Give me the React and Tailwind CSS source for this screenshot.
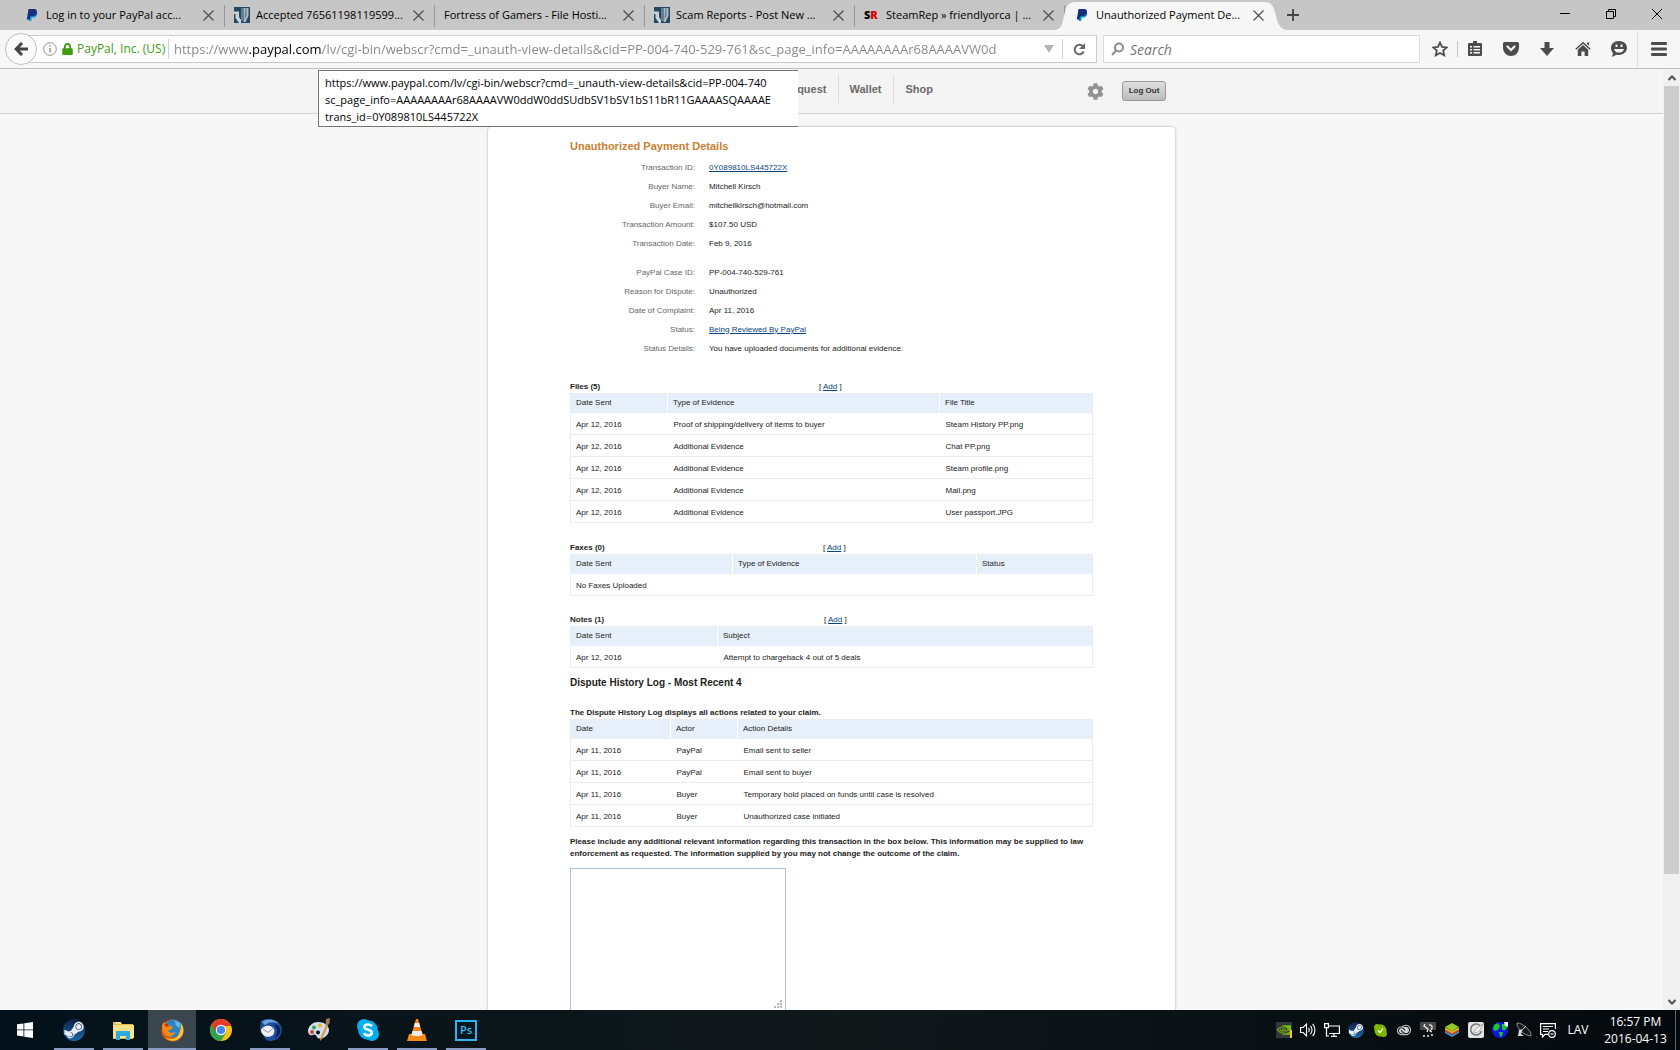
import { useState } from "react";
import { FaSteamSymbol, FaSkype, FaCog, FaLock } from "react-icons/fa";
import { SiAdobecreativecloud, SiNvidia } from "react-icons/si";

const URL_TEXT =
    "https://www.paypal.com/lv/cgi-bin/webscr?cmd=_unauth-view-details&cid=PP-004-740-529-761&sc_page_info=AAAAAAAAr68AAAAVW0d";

const PayPalIcon = () => (
    <svg className="w-4 h-4 shrink-0" viewBox="0 0 16 16">
        <path d="M6 5h6.600c1.300 1 .9 5.600-3.800 5.600H7.800L7.200 14H4.600z" fill="#139ad6" />
        <path d="M4.500 2h5.300c3 0 3.600 2 3 4-.6 2.300-2.300 3.300-4.600 3.300H6.400L5.600 12.500H2.800z" fill="#17307a" />
    </svg>
);

const ForumIcon = () => (
    <svg className="w-4 h-4 shrink-0" viewBox="0 0 16 16">
        <rect width="16" height="16" fill="#23485f" />
        <path d="M0 0h5.500v4H0z" fill="#23485f" />
        <path d="M0 4.500h5V10l2 3v3H5L1.500 11V7H0z" fill="#c9d2d8" />
        <path d="M7 1h2v13H7z" fill="#5f7c8d" />
        <path d="M9.500 1h5v8l-3 6h-2z" fill="#aebbc4" />
        <path d="M11.500 1h1v8l-2 4z" fill="#5f7c8d" />
    </svg>
);

const SteamRepIcon = () => (
    <span className="w-4 shrink-0 text-[11px] font-extrabold leading-4 text-black">
        S<span className="text-[#e10000]">R</span>
    </span>
);

const CloseIcon = () => (
    <svg className="w-[11px] h-[11px]" viewBox="0 0 11 11" stroke="#4d4d4d" strokeWidth="1.2">
        <path d="M.5.5l10 10M10.500.5l-10 10" />
    </svg>
);

const tabs = [
    { title: "Log in to your PayPal acc...", icon: <PayPalIcon /> },
    { title: "Accepted 76561198119599...", icon: <ForumIcon /> },
    { title: "Fortress of Gamers - File Hosti..." },
    { title: "Scam Reports - Post New ...", icon: <ForumIcon /> },
    { title: "SteamRep » friendlyorca | ...", icon: <SteamRepIcon /> },
    { title: "Unauthorized Payment De...", icon: <PayPalIcon />, active: true },
];

const Tab = ({ title, icon, active }) => (
    <div className="relative flex items-center w-[210px] h-[30px] pl-[9px] pr-[11px]">
        {active && (
            <svg className="absolute -left-3 top-0 w-[236px] h-[30px]" viewBox="0 0 236 30">
                <path d="M0 30c9 0 9-6 11-14s3-14 12-14h188c9 0 10 6 12 14s4 14 13 14z" fill="#f6f6f6" />
            </svg>
        )}
        <button className="relative flex flex-1 items-center gap-[6px] min-w-0 text-left whitespace-nowrap">
            {icon}
            <span>{title}</span>
        </button>
        <button className="relative" aria-label="Close tab">
            <CloseIcon />
        </button>
        {!active && <span className="absolute right-0 top-[5px] h-[22px] w-px bg-[#989898]" />}
    </div>
);

const TabBar = () => (
    <div className="flex h-[30px] bg-[#c6c6c6] pl-[15px] text-[11px]">
        {tabs.map((tab) => (
            <Tab key={tab.title} {...tab} />
        ))}
        <button className="ml-[12px]" aria-label="New tab">
            <svg className="w-3 h-3" viewBox="0 0 12 12" stroke="#444" strokeWidth="1.800">
                <path d="M6 0v12M0 6h12" />
            </svg>
        </button>
        <div className="ml-auto flex items-center gap-9 pr-[18px] pb-[2px]">
            <button aria-label="Minimize">
                <svg className="w-[10px] h-[10px]" viewBox="0 0 10 10" stroke="#000">
                    <path d="M0 4.500h10" />
                </svg>
            </button>
            <button aria-label="Restore">
                <svg className="w-[10px] h-[10px]" viewBox="0 0 10 10" stroke="#000" fill="none">
                    <path d="M.5 2.500h7v7h-7zM2.500 2.500v-2h7v7h-2" />
                </svg>
            </button>
            <button aria-label="Close window">
                <svg className="w-[10px] h-[10px]" viewBox="0 0 10 10" stroke="#000">
                    <path d="M0 0l10 10M10 0L0 10" />
                </svg>
            </button>
        </div>
    </div>
);

const ToolButton = ({ label, children }) => (
    <button aria-label={label} className="flex w-9 justify-center text-[#4c4c4c]">
        {children}
    </button>
);

const ToolBar = () => {
    const [url, setUrl] = useState(URL_TEXT);
    return (
        <div className="relative flex items-center h-[39px] bg-[#f6f6f6] border-b border-[#bdbdbd] pl-[5px]">
            <button
                aria-label="Back"
                className="relative z-10 flex items-center justify-center w-8 h-8 rounded-full border border-[#c2c2c2] bg-[#fafafa]"
            >
                <svg className="w-[14px] h-[14px]" viewBox="0 0 14 14" stroke="#444" strokeWidth="3" fill="none">
                    <path d="M8 1L2.200 7 8 13M2.500 7H14" />
                </svg>
            </button>
            <div className="flex flex-1 items-center h-7 -ml-3 pl-[17px] bg-white border border-[#cacaca]">
                <svg className="w-[14px] h-[14px]" viewBox="0 0 14 14" fill="none" stroke="#8f8f8f">
                    <circle cx="7" cy="7" r="6.300" />
                    <path d="M7 6v4.500M7 3.300v1.500" strokeWidth="1.500" />
                </svg>
                <FaLock className="ml-[5px] w-[11px] h-[12px] text-[#3f9a14]" />
                <span className="ml-1 w-[89px] whitespace-nowrap text-[12px] text-[#3f9a14]">PayPal, Inc. (US)</span>
                <span className="w-px h-5 mx-[2px] bg-[#cfcfcf]" />
                <input
                    aria-label="Address"
                    value={url}
                    onChange={(e) => setUrl(e.target.value)}
                    className="flex-1 min-w-0 h-6 ml-[3px] text-[13px] text-transparent caret-black outline-none bg-clip-text bg-[linear-gradient(90deg,#858585_75px,#000_75px,#000_148px,#858585_148px)]"
                />
                <button aria-label="Show history" className="px-[8px]">
                    <svg className="w-[10px] h-2" viewBox="0 0 10 8" fill="#b4b4b4">
                        <path d="M0 0h10L5 8z" />
                    </svg>
                </button>
                <span className="w-px h-5 bg-[#cfcfcf]" />
                <button aria-label="Reload" className="px-[10px]">
                    <svg className="w-[13px] h-[13px]" viewBox="0 0 13 13" fill="none" stroke="#6a6a6a" strokeWidth="2">
                        <path d="M10 3.500A4.700 4.700 0 1 0 10.700 8.500" />
                        <path d="M12 0v6H6z" fill="#6a6a6a" stroke="none" />
                    </svg>
                </button>
            </div>
            <div className="flex items-center w-[317px] h-7 ml-[6px] pl-[7px] gap-[5px] bg-white border border-[#dcdcdc]">
                <svg className="w-[14px] h-[14px]" viewBox="0 0 14 14" fill="none" stroke="#8c8c8c" strokeWidth="2">
                    <circle cx="8" cy="5.500" r="4" />
                    <path d="M5 8.500L1 13" />
                </svg>
                <input
                    aria-label="Search"
                    placeholder="Search"
                    className="flex-1 min-w-0 text-[14px] italic outline-none placeholder:text-[#757575]"
                />
            </div>
            <div className="flex items-center pl-[2px]">
                <ToolButton label="Bookmark">
                    <svg className="w-4 h-4" viewBox="0 0 16 16" fill="none" stroke="currentColor" strokeWidth="1.800">
                        <path d="M8 1.500l2 4.400 4.700.5-3.500 3.200 1 4.700L8 12l-4.200 2.300 1-4.700L1.300 6.400 6 5.900z" />
                    </svg>
                </ToolButton>
                <span className="w-px h-4 -mx-px bg-[#c8c8c8]" />
                <ToolButton label="Bookmarks list">
                    <svg className="w-4 h-4" viewBox="0 0 16 16" fill="currentColor">
                        <path d="M6 0h4v2h4a1 1 0 0 1 1 1v11a1 1 0 0 1-1 1H2a1 1 0 0 1-1-1V3a1 1 0 0 1 1-1h4z" />
                        <path d="M3 5h2v1.600H3zM6.500 5H13v1.600H6.500zM3 8h2v1.600H3zM6.500 8H13v1.600H6.500zM3 11h2v1.600H3zM6.500 11H13v1.600H6.500z" fill="#f6f6f6" />
                    </svg>
                </ToolButton>
                <ToolButton label="Pocket">
                    <svg className="w-4 h-4" viewBox="0 0 16 16">
                        <path d="M1.500 1h13A1.500 1.500 0 0 1 16 2.500V7A8 8 0 0 1 0 7V2.500A1.500 1.500 0 0 1 1.500 1z" fill="currentColor" />
                        <path d="M4.500 5.500L8 9l3.500-3.500" fill="none" stroke="#f6f6f6" strokeWidth="2.200" strokeLinecap="round" />
                    </svg>
                </ToolButton>
                <ToolButton label="Downloads">
                    <svg className="w-4 h-4" viewBox="0 0 16 16" fill="currentColor">
                        <path d="M5.500 1h5v6H15l-7 8-7-8h4.500z" />
                    </svg>
                </ToolButton>
                <ToolButton label="Home">
                    <svg className="w-4 h-4" viewBox="0 0 16 16" fill="currentColor">
                        <path d="M8 .8l7.700 7-1 1L8 2.800 1.300 8.800l-1-1zM12 1.500h2v3.300l-2-1.800z" />
                        <path d="M8 4l5.200 4.800V15H9.600v-4.500H6.400V15H2.800V8.800z" />
                    </svg>
                </ToolButton>
                <ToolButton label="Hello">
                    <svg className="w-4 h-4" viewBox="0 0 16 16" fill="currentColor">
                        <path d="M8 0c5 0 8 3 8 6.800S12.500 14 8 14c-1 0-1.800-.1-2.500-.3L1 16l1-4C.7 10.700 0 8.900 0 6.800 0 3 3 0 8 0z" />
                        <path d="M4.500 3.500h2V6h-2zM9.500 3.500h2V6h-2zM3 8h10c-.5 2.500-2.500 3.600-5 3.600S3.500 10.500 3 8z" fill="#f6f6f6" />
                    </svg>
                </ToolButton>
                <span className="w-px h-9 bg-[#e0e0e0]" />
                <button aria-label="Menu" className="px-[13px]">
                    <svg className="w-4 h-[14px]" viewBox="0 0 16 14" fill="#4c4c4c">
                        <rect width="16" height="3" rx="1" />
                        <rect y="5.500" width="16" height="3" rx="1" />
                        <rect y="11" width="16" height="3" rx="1" />
                    </svg>
                </button>
            </div>
        </div>
    );
};

const Header = () => (
    <header className="h-[45px] bg-[#f4f4f4] border-b border-[#d4d4d4]">
        <div className="flex justify-end w-[687px] mx-auto pr-[9px] text-[11px] font-bold text-[#6b6b6b]">
            <nav className="flex h-7 mt-[6px] leading-7">
                <a href="#request" className="px-[11px] border-r border-[#dcdcdc]">Request</a>
                <a href="#wallet" className="px-[11px] border-r border-[#dcdcdc]">Wallet</a>
                <a href="#shop" className="px-[12px]">Shop</a>
            </nav>
            <button aria-label="Settings" className="h-[45px] ml-[142px] mr-[18px]">
                <FaCog className="w-[17px] h-[17px] text-[#929292]" />
            </button>
            <button className="w-11 h-5 mt-[12px] rounded-[3px] border border-[#9b9b9b] bg-linear-to-b from-[#dedede] to-[#bdbdbd] text-[8px] text-[#333]">
                Log Out
            </button>
        </div>
    </header>
);

const link = "text-[#084482] underline";

const details = [
    [
        ["Transaction ID:", <a href="#transaction" className={link}>0Y089810LS445722X</a>],
        ["Buyer Name:", "Mitchell Kirsch"],
        ["Buyer Email:", "mitchellkirsch@hotmail.com"],
        ["Transaction Amount:", "$107.50 USD"],
        ["Transaction Date:", "Feb 9, 2016"],
    ],
    [
        ["PayPal Case ID:", "PP-004-740-529-761"],
        ["Reason for Dispute:", "Unauthorized"],
        ["Date of Complaint:", "Apr 11, 2016"],
        ["Status:", <a href="#status" className={link}>Being Reviewed By PayPal</a>],
        ["Status Details:", "You have uploaded documents for additional evidence."],
    ],
];

const files = [
    ["Apr 12, 2016", "Proof of shipping/delivery of items to buyer", "Steam History PP.png"],
    ["Apr 12, 2016", "Additional Evidence", "Chat PP.png"],
    ["Apr 12, 2016", "Additional Evidence", "Steam profile.png"],
    ["Apr 12, 2016", "Additional Evidence", "Mail.png"],
    ["Apr 12, 2016", "Additional Evidence", "User passport.JPG"],
];

const log = [
    ["Apr 11, 2016", "PayPal", "Email sent to seller"],
    ["Apr 11, 2016", "PayPal", "Email sent to buyer"],
    ["Apr 11, 2016", "Buyer", "Temporary hold placed on funds until case is resolved"],
    ["Apr 11, 2016", "Buyer", "Unauthorized case initiated"],
];

const DataTable = ({ cols, head, rows }) => (
    <table className="w-full table-fixed border border-[#ececec] text-left">
        <colgroup>
            {cols.map((c, i) => (
                <col key={i} className={c} />
            ))}
        </colgroup>
        <thead>
            <tr className="h-[19px] bg-[#e7f0fa]">
                {head.map((h) => (
                    <th key={h} className="pl-[5px] font-normal border-l border-white first:border-l-0">{h}</th>
                ))}
            </tr>
        </thead>
        <tbody>
            {rows.map((row, i) => (
                <tr key={i} className="h-[22px] border-b border-[#ececec]">
                    {row.map((cell, j) => (
                        <td key={j} className="pt-[3px] pl-[6px] first:pl-[5px]">{cell}</td>
                    ))}
                </tr>
            ))}
        </tbody>
    </table>
);

const SectionTitle = ({ title, width }) => (
    <div className="flex h-[13px] items-center">
        <h3 className={`font-bold ${width}`}>{title}</h3>
        <span>
            [ <a href="#add" className={link}>Add</a> ]
        </span>
    </div>
);

const Details = () => (
    <main className="w-[687px] mx-auto mt-[13px] h-[960px] pl-[82px] pr-[82px] pt-[12px] rounded-[4px] bg-white shadow-[0_0_3px_rgba(0,0,0,0.3)] text-[8px] leading-[10px] text-[#222]">
        <h1 className="text-[11px] leading-[14px] font-bold text-[#cc7f32]">Unauthorized Payment Details</h1>
        <div className="flex flex-col gap-[10px] mt-[5px]">
            {details.map((group, i) => (
                <dl key={i}>
                    {group.map(([label, value]) => (
                        <div key={label} className="flex items-center h-[19px]">
                            <dt className="w-[125px] text-right text-[#666]">{label}</dt>
                            <dd className="ml-[14px]">{value}</dd>
                        </div>
                    ))}
                </dl>
            ))}
        </div>
        <section className="mt-[22px]">
            <SectionTitle title="Files (5)" width="w-[249px]" />
            <DataTable
                cols={["w-[97px]", "w-[272px]", ""]}
                head={["Date Sent", "Type of Evidence", "File Title"]}
                rows={files}
            />
        </section>
        <section className="mt-[18px]">
            <SectionTitle title="Faxes (0)" width="w-[253px]" />
            <DataTable
                cols={["w-[162px]", "w-[244px]", ""]}
                head={["Date Sent", "Type of Evidence", "Status"]}
                rows={[["No Faxes Uploaded", "", ""]]}
            />
        </section>
        <section className="mt-[17px]">
            <SectionTitle title="Notes (1)" width="w-[254px]" />
            <DataTable
                cols={["w-[147px]", ""]}
                head={["Date Sent", "Subject"]}
                rows={[["Apr 12, 2016", "Attempt to chargeback 4 out of 5 deals"]]}
            />
        </section>
        <h2 className="mt-[8px] text-[10px] leading-[14px] font-bold">Dispute History Log - Most Recent 4</h2>
        <section className="mt-[16px]">
            <p className="h-[13px] leading-[13px] font-bold">The Dispute History Log displays all actions related to your claim.</p>
            <DataTable
                cols={["w-[100px]", "w-[67px]", ""]}
                head={["Date", "Actor", "Action Details"]}
                rows={log}
            />
        </section>
        <label htmlFor="info" className="block mt-[9px] leading-3 font-bold whitespace-nowrap">
            Please include any additional relevant information regarding this transaction in the box below. This information may be supplied to law
            <br />
            enforcement as requested. The information supplied by you may not change the outcome of the claim.
        </label>
        <div className="relative w-[216px] mt-[8px]">
            <textarea id="info" className="block w-full h-[143px] resize-none border border-[#a9c1da] outline-none" />
            <svg className="absolute right-1 bottom-[3px] w-2 h-2" viewBox="0 0 8 8" fill="#b5b5b5">
                <path d="M6 0h2v2H6zM6 3h2v2H6zM3 3h2v2H3zM6 6h2v2H6zM3 6h2v2H3zM0 6h2v2H0z" />
            </svg>
        </div>
    </main>
);

const ScrollBar = () => (
    <div className="flex flex-col items-center w-[17px] bg-[#f0f0f0]">
        <svg className="w-2 h-[17px]" viewBox="0 0 8 17" fill="none" stroke="#505050" strokeWidth="2">
            <path d="M.5 11L4 7.500 7.500 11" />
        </svg>
        <div className="w-[15px] h-[788px] bg-[#cdcdcd]" />
        <svg className="w-2 h-[17px] mt-auto" viewBox="0 0 8 17" fill="none" stroke="#505050" strokeWidth="2">
            <path d="M.5 7L4 10.500 7.500 7" />
        </svg>
    </div>
);

const SteamLogo = ({ size }) => (
    <span className={`flex items-center justify-center rounded-full bg-linear-to-b from-[#0d1f45] to-[#1b6ba8] text-[#e8edf2] ${size}`}>
        <FaSteamSymbol className="w-full h-full" />
    </span>
);

const SkypeLogo = () => (
    <svg className="w-[22px] h-[22px]" viewBox="0 0 22 22">
        <circle cx="7" cy="7" r="7" fill="#00aff0" />
        <circle cx="15" cy="15" r="7" fill="#00aff0" />
        <circle cx="11" cy="11" r="9.800" fill="#00aff0" />
        <path d="M14.800 7.500c-.8-1.600-2.200-2-3.800-2-2 0-3.600.9-3.600 2.600 0 3.600 7.400 1.800 7.400 5.400 0 1.900-1.800 2.900-3.800 2.900-1.800 0-3.300-.7-3.900-2.400" fill="none" stroke="#fff" strokeWidth="2.600" />
    </svg>
);

const taskItems = [
    {
        name: "Start",
        icon: (
            <svg className="w-4 h-4" viewBox="0 0 16 16" fill="#fff">
                <path d="M0 2.300l6.500-.9v6.100H0zM7.300 1.300L16 0v7.500H7.300zM0 8.300h6.500v6.200L0 13.600zM7.300 8.300H16V16l-8.700-1.300z" />
            </svg>
        ),
    },
    { name: "Steam", open: true, icon: <SteamLogo size="w-[22px] h-[22px]" /> },
    {
        name: "File Explorer",
        open: true,
        icon: (
            <svg className="w-[22px] h-[19px]" viewBox="0 0 22 19">
                <path d="M1 1h8l1 2h11v15H1z" fill="#e8b93b" />
                <path d="M1 4h21v13H1z" fill="#fbe08b" />
                <path d="M3 1.500h6v1H3z" fill="#fff" />
                <path d="M4 10h14v9h-4v-4H8v4H4z" fill="#2da9e1" />
            </svg>
        ),
    },
    {
        name: "Firefox",
        open: true,
        active: true,
        icon: (
            <svg className="w-[23px] h-[23px]" viewBox="0 0 23 23">
                <circle cx="11.500" cy="11.500" r="11" fill="#e66000" />
                <circle cx="12.500" cy="9.500" r="9" fill="#2c83c6" />
                <path d="M12 1c2 1 3 3 2.500 5l4 3 1-5z" fill="#63b8e8" />
                <path d="M1 6l2-3 1 2c2-.5 4 0 5 2l3 1-2 2.500-3 1c1 3 5 3 7.500 1-1 4-5 5.500-8 4.500C4 16 1 12 1 6z" fill="#f58b14" />
                <path d="M20 4c3 4 3.500 10 0 14-4 4.500-11 5-15 1 5 2 11 1 13-4 1.500-4 2-7 2-11z" fill="#fdc02f" />
                <path d="M3 5l2 3c1-.8 2-1 3-.7L7 5z" fill="#b13a0a" />
            </svg>
        ),
    },
    {
        name: "Chrome",
        icon: (
            <svg className="w-[22px] h-[22px]" viewBox="0 0 22 22">
                <circle cx="11" cy="11" r="11" fill="#fbc116" />
                <path d="M11 11L1.500 5.500A11 11 0 0 0 11 22l5-8z" fill="#31a350" />
                <path d="M1.500 5.500A11 11 0 0 1 20.500 5.500L21 7H11L6 13z" fill="#e33b2e" />
                <circle cx="11" cy="11" r="5.200" fill="#fff" />
                <circle cx="11" cy="11" r="4.100" fill="#4587f4" />
            </svg>
        ),
    },
    {
        name: "Thunderbird",
        open: true,
        icon: (
            <svg className="w-[23px] h-[22px]" viewBox="0 0 23 22">
                <path d="M2 2c6-4 16-2 20 5 2 5 0 11-6 14-5 2-9 0-9 0L1 11z" fill="#1f4f9c" />
                <path d="M3 3c5-4 13-3 17 2-5-3-11-2-14 1z" fill="#6fa4dc" />
                <path d="M2 11c1-3 7-6 11-3 3 2 3 5 1 8-4 3-8 2-10-.500-1.500-1.500-2-3-2-4.500z" fill="#eef0f4" />
                <path d="M4 10l5 3.500 5-4" stroke="#8c95a5" fill="none" />
                <path d="M15 6c4 3 4 9 0 13 5-1 7-6 6-10-1-2-4-4-6-3z" fill="#0c2352" />
            </svg>
        ),
    },
    {
        name: "Paint",
        icon: (
            <svg className="w-6 h-6" viewBox="0 0 24 24">
                <path d="M11 4C5 4 1 9 1 13c0 4 3 5 5 4s3 0 4 2c2 4 12 0 12-7 0-5-5-8-11-8z" fill="#cfe0f2" />
                <circle cx="5" cy="14" r="2" fill="#d93a3a" />
                <circle cx="7" cy="9.500" r="2" fill="#41a54a" />
                <circle cx="13" cy="7.500" r="2" fill="#e9b52d" />
                <circle cx="11" cy="14.500" r="2" fill="#0a1218" />
                <path d="M19 7l2 1-6 13-2 2 .5-3.500z" fill="#e2923a" />
                <path d="M19 1l4-1-.5 5-2 3-2-1z" fill="#a9784f" />
            </svg>
        ),
    },
    { name: "Skype", open: true, icon: <SkypeLogo /> },
    {
        name: "VLC",
        open: true,
        icon: (
            <svg className="w-5 h-[22px]" viewBox="0 0 20 22">
                <path d="M2 15h16l2 7H0z" fill="#f28c13" />
                <path d="M9 0h2l5 17c-2 2-10 2-12 0z" fill="#f6861a" />
                <path d="M7.800 4h4.400l1.100 4H6.700zM5.500 12h9l1.200 4c-2 1.500-9.500 1.500-11.400 0z" fill="#ececec" />
            </svg>
        ),
    },
    {
        name: "Photoshop",
        open: true,
        icon: (
            <span className="flex items-center justify-center w-[22px] h-[21px] border-2 border-[#2fb4ef] bg-[#07161f] text-[11px] font-semibold text-[#35bdf5]">
                Ps
            </span>
        ),
    },
];

const tray = [
    <span className="relative flex items-center justify-center w-4 h-4 bg-[#33383c]">
        <SiNvidia className="w-[14px] h-[14px] text-[#76b900]" />
        <span className="absolute right-0 bottom-0 w-[2px] h-2 bg-[#f5c518]" />
    </span>,
    <svg className="w-4 h-4" viewBox="0 0 16 16" fill="none" stroke="#fff" strokeWidth="1.100">
        <path d="M.6 5.500h2.500L6.500 2v12L3.100 10.500H.6zM8.500 6c1 1 1 3 0 4M10.500 4c2 2 2 6 0 8M12.700 2c3 3 3 9 0 12" />
    </svg>,
    <svg className="w-4 h-4" viewBox="0 0 16 16" fill="none" stroke="#fff" strokeWidth="1.200">
        <path d="M5 4h10.400v7.500H5M10 11.500V14M7 14.400h6M.6 1.600h3.800v4H.6zM2.500 5.600V14H5" />
    </svg>,
    <SteamLogo size="w-4 h-4" />,
    <span className="relative">
        <FaSkype className="w-[15px] h-[15px] text-[#7fba00]" />
        <svg className="absolute inset-[3px] w-[9px] h-[9px]" viewBox="0 0 9 9">
            <circle cx="4.500" cy="4.500" r="4.500" fill="#7fba00" />
            <path d="M2 4.500l2 2 3-4" stroke="#fff" strokeWidth="1.200" fill="none" />
        </svg>
    </span>,
    <SiAdobecreativecloud className="w-[14px] h-[14px] text-[#d2d2d2]" />,
    <svg className="w-4 h-4" viewBox="0 0 16 16">
        <rect width="16" height="16" fill="#4a4a4a" />
        <path d="M0 8h16v8H0z" fill="#0b0b0b" />
        <path d="M5 2l-1 2 4 3-1 3M9 3c4-1 4 4 1 6l2 1M3 14h2M7 14h2M11 13h2" stroke="#eee" fill="none" strokeWidth="1.300" />
    </svg>,
    <svg className="w-4 h-4" viewBox="0 0 16 16">
        <path d="M1 9l7 4 7-4v2l-7 4-7-4z" fill="#2c9fd8" />
        <path d="M1 7l7 4 7-4v2l-7 4-7-4z" fill="#e23e2a" />
        <path d="M1 5.500l7 4 7-4v1.800l-7 4-7-4z" fill="#f6c62c" />
        <path d="M8 1l7 4-7 4.500L1 5z" fill="#9bc724" />
    </svg>,
    <svg className="w-4 h-4" viewBox="0 0 16 16">
        <rect width="16" height="16" rx="2" fill="#e4e4e4" />
        <path d="M12 3.500A5.500 5.500 0 1 0 13.500 9" fill="none" stroke="#777" strokeWidth="1.500" />
        <path d="M6 10l3-4 6-4-3 6-4 3z" fill="#fafafa" stroke="#888" strokeWidth=".7" />
    </svg>,
    <svg className="w-4 h-4" viewBox="0 0 16 16">
        <circle cx="8" cy="8" r="8" fill="#0d16e8" />
        <path d="M2 3l4-2 2 3-2 4-3 1-2-2zM10 2h3l2 4-3 3-2-2zM7 10h4l-1 4-2 1z" fill="#18c81c" />
        <path d="M12 0h4v5l-3-1z" fill="#e9eefb" />
    </svg>,
    <svg className="w-4 h-4" viewBox="0 0 16 16" fill="none">
        <path d="M1 1c0 6 6 12 14 13 1-5-8-13-14-13z" fill="#15191c" stroke="#8f8f8f" />
        <path d="M3 8l4-1-2 5 3 2H2z" fill="#d9d9d9" />
        <path d="M7 7l3-3" stroke="#ddd" />
    </svg>,
    <svg className="w-4 h-4" viewBox="0 0 16 16" fill="none" stroke="#fff" strokeWidth="1.200">
        <path d="M8 12.400H5L2.500 15v-2.600H.6V1.600h14.800V7M3 4.500h10M3 7h6M3 9.500h5" />
        <circle cx="12" cy="12" r="3.300" />
        <path d="M10.500 12h3" />
    </svg>,
];

const TaskBar = () => (
    <footer className="flex h-10 bg-linear-to-r from-[#03111a] via-[#11181a] to-[#04090e] text-white">
        <div className="flex gap-px pl-px">
            {taskItems.map(({ name, icon, open, active }) => (
                <button
                    key={name}
                    aria-label={name}
                    className={`relative flex items-center justify-center w-12 h-10 ${active ? "bg-[#3b474e]" : ""}`}
                >
                    {icon}
                    {open && <span className={`absolute bottom-0 h-[2px] bg-[#8b9cc4] ${active ? "inset-x-0" : "inset-x-1"}`} />}
                </button>
            ))}
        </div>
        <div className="flex items-center ml-auto">
            {tray.map((icon, i) => (
                <span key={i} className="flex justify-center w-6">{icon}</span>
            ))}
            <span className="w-9 text-center text-[12px]">LAV</span>
            <time className="w-[79px] text-center text-[12px] leading-[17px]">
                16:57 PM
                <br />
                2016-04-13
            </time>
            <span className="h-full w-px mr-1 bg-[#5d6468]" />
        </div>
    </footer>
);

const App = () => {
    return (
        <div className="flex flex-col h-screen overflow-hidden font-['Open_Sans',sans-serif] text-black">
            <TabBar />
            <ToolBar />
            <div className="relative flex flex-1 min-h-0">
                <div className="flex-1 overflow-hidden bg-[#f7f7f7] font-['Liberation_Sans',Arial,sans-serif]">
                    <Header />
                    <Details />
                </div>
                <ScrollBar />
                <div className="absolute left-[318px] top-px w-[480px] h-[57px] pl-[6px] pt-[3px] overflow-hidden whitespace-nowrap border border-r-0 border-[#767676] bg-white text-[11px] leading-[17px]">
                    https://www.paypal.com/lv/cgi-bin/webscr?cmd=_unauth-view-details&cid=PP-004-740
                    <br />
                    sc_page_info=AAAAAAAAr68AAAAVW0ddW0ddSUdbSV1bSV1bS11bR11GAAAASQAAAAE
                    <br />
                    trans_id=0Y089810LS445722X
                </div>
            </div>
            <TaskBar />
        </div>
    );
};

export default App;
